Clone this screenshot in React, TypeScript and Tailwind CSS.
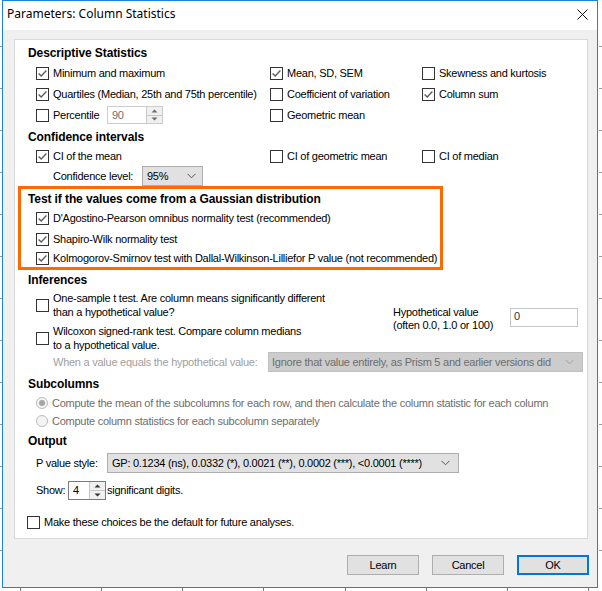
import React from "react";

const FONT = "font-['Liberation_Sans',Arial,sans-serif]";

function Box({ checked }: { checked?: boolean }) {
  return (
    <span className="w-[13px] h-[13px] border border-[#333333] bg-white flex items-center justify-center shrink-0">
      {checked && (
        <svg width="11" height="11" viewBox="0 0 11 11">
          <path d="M1.6 5.4 L4.2 8 L9.4 2.6" stroke="#5e5e5e" strokeWidth="1.4" fill="none" />
        </svg>
      )}
    </span>
  );
}

function Check({ checked, label, w }: { checked?: boolean; label: string; w?: string }) {
  return (
    <div className={`flex items-center gap-[4px] ${w ?? ""}`}>
      <Box checked={checked} />
      <span className="whitespace-nowrap">{label}</span>
    </div>
  );
}

function Chevron({ color = "#555555" }: { color?: string }) {
  return (
    <svg width="9" height="6" viewBox="0 0 9 6">
      <path d="M0.5 0.8 L4.5 4.8 L8.5 0.8" stroke={color} strokeWidth="1" fill="none" />
    </svg>
  );
}

function SpinArrows({ light }: { light?: boolean }) {
  const c = light ? "#6a6a6a" : "#333333";
  return (
    <div className="flex flex-col w-[16px] h-full border-l border-[#c8c8c8] bg-[#f0f0f0]">
      <div className="flex-1 flex items-center justify-center border-b border-[#c8c8c8]">
        <svg width="7" height="4" viewBox="0 0 7 4">
          <path d="M0.5 3.5 L3.5 0.5 L6.5 3.5 Z" fill={c} />
        </svg>
      </div>
      <div className="flex-1 flex items-center justify-center">
        <svg width="7" height="4" viewBox="0 0 7 4">
          <path d="M0.5 0.5 L3.5 3.5 L6.5 0.5 Z" fill={c} />
        </svg>
      </div>
    </div>
  );
}

function Header({ children, cls }: { children: React.ReactNode; cls: string }) {
  return (
    <div className={`flex items-center font-bold text-[12px] tracking-[-0.1px] text-black ${cls}`}>{children}</div>
  );
}

export default function App() {
  return (
    <div className={`relative w-[602px] h-[591px] bg-white overflow-hidden ${FONT} text-[11px] tracking-[-0.25px] text-black`}>
      {/* background ticks */}
      {[20, 101, 182, 263, 345, 426, 507, 588].map((x) => (
        <span key={x} className="absolute top-[588px] w-[1px] h-[3px] bg-[#7a7a7a]" style={{ left: x }} />
      ))}
      {[46, 88, 130, 172, 214, 256, 298, 340, 382, 424, 466, 508, 550].map((y) => (
        <span key={"l" + y} className="absolute left-0 w-[2px] h-[1px] bg-[#9a9a9a]" style={{ top: y }} />
      ))}
      {[46, 88, 130, 172, 214, 256, 298, 340, 382, 424, 466, 508, 550].map((y) => (
        <span key={"r" + y} className="absolute left-[599px] w-[3px] h-[1px] bg-[#9a9a9a]" style={{ top: y }} />
      ))}

      <div className="pl-[2px]">
        <div className="w-[596px] h-[588px] border border-[#1c84d8] flex flex-col bg-[#f0f0f0]">
          {/* title bar */}
          <div className="h-[29px] pb-[3px] bg-white flex items-center justify-between shrink-0">
            <span className="pl-[4px] text-[12px] tracking-normal font-['Noto_Sans','Open_Sans',sans-serif] text-black">
              Parameters: Column Statistics
            </span>
            <div className="w-[30px] h-[26px] flex items-center justify-center">
              <svg width="11" height="11" viewBox="0 0 11 11">
                <path d="M0.5 0.5 L10.5 10.5 M10.5 0.5 L0.5 10.5" stroke="#111111" strokeWidth="1" />
              </svg>
            </div>
          </div>

          {/* body */}
          <div className="flex-1 pl-[11px] pr-[9px] pt-[9px]">
            <div className="h-[500px] border border-[#d9d9d9] bg-white flex flex-col">
              <Header cls="h-[18px] mt-[4px] pl-[13px]">Descriptive Statistics</Header>
              <div className="pl-[21px] mt-[1px]">
                <div className="flex h-[21px] items-center">
                  <Check checked label="Minimum and maximum" w="w-[234px]" />
                  <Check checked label="Mean, SD, SEM" w="w-[152px]" />
                  <Check label="Skewness and kurtosis" />
                </div>
                <div className="flex h-[21px] items-center">
                  <Check checked label="Quartiles (Median, 25th and 75th percentile)" w="w-[234px]" />
                  <Check label="Coefficient of variation" w="w-[152px]" />
                  <Check checked label="Column sum" />
                </div>
                <div className="flex h-[20px] items-center">
                  <div className="w-[234px] flex items-center">
                    <Box />
                    <span className="ml-[4px] w-[54px]">Percentile</span>
                    <div className="w-[56px] h-[18px] border border-[#cccccc] bg-white flex">
                      <span className="flex-1 pl-[4px] text-[#6d6d6d] leading-[16px]">90</span>
                      <SpinArrows light />
                    </div>
                  </div>
                  <Check label="Geometric mean" />
                </div>
              </div>

              <Header cls="h-[20px] mt-[2px] pl-[13px]">Confidence intervals</Header>
              <div className="pl-[21px] flex h-[18px] items-center">
                <Check checked label="CI of the mean" w="w-[234px]" />
                <Check label="CI of geometric mean" w="w-[152px]" />
                <Check label="CI of median" />
              </div>
              <div className="pl-[38px] mt-[1px] flex h-[20px] items-center">
                <span className="w-[89px] whitespace-nowrap">Confidence level:</span>
                <div className="w-[61px] h-[20px] border border-[#adadad] bg-[#e1e1e1] flex items-center justify-between pl-[4px] pr-[6px]">
                  <span>95%</span>
                  <Chevron />
                </div>
              </div>

              {/* highlighted Gaussian section */}
              <div className="ml-[3px] w-[425px] h-[84px] border-[3px] border-[#ff6a00] flex flex-col">
                <Header cls="h-[19px] pl-[7px]">Test if the values come from a Gaussian distribution</Header>
                <div className="pl-[15px]">
                  <div className="h-[21px] flex items-center">
                    <Check checked label="D'Agostino-Pearson omnibus normality test (recommended)" />
                  </div>
                  <div className="h-[21px] flex items-center">
                    <Check checked label="Shapiro-Wilk normality test" />
                  </div>
                  <div className="h-[17px] flex items-center">
                    <Check checked label="Kolmogorov-Smirnov test with Dallal-Wilkinson-Lilliefor P value (not recommended)" />
                  </div>
                </div>
              </div>

              <Header cls="h-[20px] pl-[13px]">Inferences</Header>
              <div className="flex">
                <div className="w-[378px] pl-[21px]">
                  <div className="mt-[1px] flex items-center gap-[4px]">
                    <Box />
                    <span className="leading-[14px] whitespace-nowrap">
                      One-sample t test. Are column means significantly different
                      <br />
                      than a hypothetical value?
                    </span>
                  </div>
                  <div className="mt-[5px] flex items-center gap-[4px]">
                    <Box />
                    <span className="leading-[14px] whitespace-nowrap">
                      Wilcoxon signed-rank test. Compare column medians
                      <br />
                      to a hypothetical value.
                    </span>
                  </div>
                </div>
                <div className="flex items-start">
                  <span className="mt-[16px] w-[117px] leading-[13px] whitespace-nowrap">
                    Hypothetical value
                    <br />
                    (often 0.0, 1.0 or 100)
                  </span>
                  <div className="mt-[18px] w-[68px] h-[19px] border border-[#c6c6c6] bg-white pl-[3px] leading-[15px] text-[#333333]">
                    0
                  </div>
                </div>
              </div>
              <div className="pl-[38px] flex h-[20px] items-center">
                <span className="w-[215px] whitespace-nowrap text-[#a0a0a0]">When a value equals the hypothetical value:</span>
                <div className="w-[315px] h-[20px] border border-[#bfbfbf] bg-[#cccccc] flex items-center justify-between pl-[3px] pr-[8px] text-[#6d6d6d]">
                  <span className="whitespace-nowrap">Ignore that value entirely, as Prism 5 and earlier versions did</span>
                  <Chevron color="#a0a0a0" />
                </div>
              </div>

              <Header cls="h-[20px] mt-[2px] pl-[13px]">Subcolumns</Header>
              <div className="pl-[21px] text-[#6d6d6d]">
                <div className="h-[18px] flex items-center gap-[4px]">
                  <span className="w-[12px] h-[12px] rounded-full border border-[#bcbcbc] bg-[#f4f4f4] flex items-center justify-center">
                    <span className="w-[6px] h-[6px] rounded-full bg-[#a6a6a6]" />
                  </span>
                  <span className="whitespace-nowrap">Compute the mean of the subcolumns for each row, and then calculate the column statistic for each column</span>
                </div>
                <div className="h-[18px] flex items-center gap-[4px]">
                  <span className="w-[12px] h-[12px] rounded-full border border-[#bcbcbc] bg-[#f4f4f4]" />
                  <span className="whitespace-nowrap">Compute column statistics for each subcolumn separately</span>
                </div>
              </div>

              <Header cls="h-[20px] mt-[1px] pl-[13px]">Output</Header>
              <div className="pl-[21px] mt-[2px] flex h-[20px] items-center">
                <span className="w-[71px] whitespace-nowrap">P value style:</span>
                <div className="w-[352px] h-[20px] border border-[#adadad] bg-[#e1e1e1] flex items-center justify-between pl-[4px] pr-[8px]">
                  <span className="whitespace-nowrap">GP: 0.1234 (ns), 0.0332 (*), 0.0021 (**), 0.0002 (***), &lt;0.0001 (****)</span>
                  <Chevron />
                </div>
              </div>
              <div className="pl-[21px] mt-[8px] flex h-[19px] items-center">
                <span className="w-[32px]">Show:</span>
                <div className="w-[38px] h-[19px] border border-[#7a7a7a] bg-white flex">
                  <span className="flex-1 pl-[4px] leading-[17px]">4</span>
                  <SpinArrows />
                </div>
                <span className="ml-[1px] whitespace-nowrap">significant digits.</span>
              </div>
              <div className="pl-[12px] mt-[13px] flex h-[18px] items-center">
                <Check label="Make these choices be the default for future analyses." />
              </div>
            </div>

            {/* buttons */}
            <div className="mt-[16px] -mr-[1px] flex justify-end gap-[13px]">
              <div className="w-[72px] h-[20px] border border-[#adadad] bg-[#e1e1e1] flex items-center justify-center">Learn</div>
              <div className="w-[72px] h-[20px] border border-[#adadad] bg-[#e1e1e1] flex items-center justify-center">Cancel</div>
              <div className="w-[72px] h-[20px] border-2 border-[#0078d7] bg-[#e1e1e1] flex items-center justify-center">OK</div>
            </div>
          </div>
        </div>
      </div>
    </div>
  );
}
